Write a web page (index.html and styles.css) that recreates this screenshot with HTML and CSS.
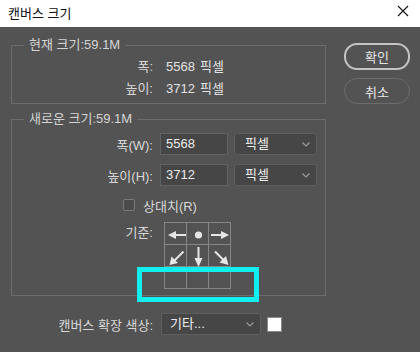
FILE: index.html
```html
<!DOCTYPE html>
<html lang="ko">
<head>
  <meta charset="UTF-8" />
  <title>캔버스 크기</title>
  <link rel="stylesheet" href="styles.css">
</head>
<body>

<div class="titlebar">
  <span class="title">캔버스 크기</span>
  <svg class="close" width="12" height="12" viewBox="0 0 12 12">
    <path d="M1 1 L11 11 M11 1 L1 11" stroke="#111" stroke-width="1.1" fill="none"/>
  </svg>
</div>

<div class="dialog">
  <div class="main">
    <fieldset class="group current">
      <legend>현재 크기:59.1M</legend>
      <div class="info-row"><span class="label">폭:</span><span class="value">5568</span><span class="unit">픽셀</span></div>
      <div class="info-row"><span class="label">높이:</span><span class="value">3712</span><span class="unit">픽셀</span></div>
    </fieldset>

    <fieldset class="group new">
      <legend>새로운 크기:59.1M</legend>
      <div class="field-row">
        <label class="label">폭(W):</label>
        <div class="num">5568</div>
        <div class="select">픽셀
          <svg class="chev" width="8" height="5" viewBox="0 0 8 5"><path d="M0.5 0.5 L4 4 L7.5 0.5" stroke="#9a9a9a" stroke-width="1.2" fill="none"/></svg>
        </div>
      </div>
      <div class="field-row second">
        <label class="label">높이(H):</label>
        <div class="num">3712</div>
        <div class="select">픽셀
          <svg class="chev" width="8" height="5" viewBox="0 0 8 5"><path d="M0.5 0.5 L4 4 L7.5 0.5" stroke="#9a9a9a" stroke-width="1.2" fill="none"/></svg>
        </div>
      </div>
      <div class="check-row">
        <span class="checkbox"></span>
        <span>상대치(R)</span>
      </div>
      <div class="anchor-row">
        <span class="label">기준:</span>
        <div class="anchor-grid">
          <div class="cell">
            <svg width="22" height="22" viewBox="0 0 22 22"><path d="M10 12 H21" stroke="#e6e6e6" stroke-width="2"/><path d="M3 12 L11 8 L11 16 Z" fill="#e6e6e6"/></svg>
          </div>
          <div class="cell">
            <svg width="22" height="22" viewBox="0 0 22 22"><circle cx="11.5" cy="12" r="3.6" fill="#e6e6e6"/></svg>
          </div>
          <div class="cell">
            <svg width="22" height="22" viewBox="0 0 22 22"><path d="M2 12 H13" stroke="#e6e6e6" stroke-width="2"/><path d="M20 12 L12 8 L12 16 Z" fill="#e6e6e6"/></svg>
          </div>
          <div class="cell">
            <svg width="22" height="22" viewBox="0 0 22 22"><path d="M18.5 6.5 L9 16" stroke="#e6e6e6" stroke-width="2"/><path d="M4.5 20 L6.5 11.5 L13 18 Z" fill="#e6e6e6"/></svg>
          </div>
          <div class="cell">
            <svg width="22" height="22" viewBox="0 0 22 22"><path d="M11.5 2 V14" stroke="#e6e6e6" stroke-width="2"/><path d="M11.5 22 L7.5 13 L15.5 13 Z" fill="#e6e6e6"/></svg>
          </div>
          <div class="cell">
            <svg width="22" height="22" viewBox="0 0 22 22"><path d="M6 6.5 L15 15.5" stroke="#e6e6e6" stroke-width="2"/><path d="M19.5 20 L10.5 17.5 L17 11 Z" fill="#e6e6e6"/></svg>
          </div>
          <div class="cell"></div>
          <div class="cell"></div>
          <div class="cell"></div>
        </div>
      </div>
    </fieldset>

    <div class="field-row ext">
      <label class="label">캔버스 확장 색상:</label>
      <div class="select wide">기타...
        <svg class="chev" width="8" height="5" viewBox="0 0 8 5"><path d="M0.5 0.5 L4 4 L7.5 0.5" stroke="#9a9a9a" stroke-width="1.2" fill="none"/></svg>
      </div>
      <span class="swatch"></span>
    </div>
  </div>

  <div class="buttons">
    <button class="btn primary">확인</button>
    <button class="btn">취소</button>
  </div>
</div>

<div class="highlight"></div>

</body>
</html>
```

FILE: styles.css
```css
body {
  font-family: "Liberation Sans", "Noto Sans CJK KR", sans-serif;
  font-size: 13px;
  background: #535353;
  color: #d8d8d8;
  margin: 0;
  padding: 0;
  width: 420px;
  height: 352px;
  overflow: hidden;
}
.titlebar {
  height: 27px;
  background: #fff;
  color: #111;
  display: flex;
  align-items: center;
  justify-content: space-between;
  padding: 0 11px 0 8px;
  box-sizing: border-box;
}
.titlebar .title {
  font-size: 13px;
  margin-top: -2px;
}
.close {
  margin-top: -6px;
}
.dialog {
  display: flex;
  padding: 10px 0 0 11px;
}
.main {
  width: 315px;
}
.group {
  margin: 0;
  padding: 0 0 3px 0;
  border: 1px solid #6c6c6c;
  min-width: 0;
}
.group legend {
  margin-left: 12px;
  padding: 0 5px;
  line-height: 16px;
  color: #d4d4d4;
}
.group.current {
  padding-top: 3px;
}
.group.new {
  margin-top: 7px;
  padding: 6px 0 6px 0;
}
.label {
  width: 141px;
  text-align: right;
  flex: none;
}
.info-row {
  display: flex;
  line-height: 22px;
}
.info-row .value {
  margin-left: 13px;
  width: 34px;
  color: #e2e2e2;
}
.info-row .unit {
  color: #e2e2e2;
}
.field-row {
  display: flex;
  align-items: center;
  height: 22px;
}
.field-row.second {
  margin-top: 9px;
}
.num {
  margin-left: 7px;
  width: 68px;
  height: 22px;
  box-sizing: border-box;
  background: #464646;
  border: 1px solid #626262;
  color: #ececec;
  padding-left: 5px;
  line-height: 20px;
}
.select {
  margin-left: 6px;
  width: 83px;
  height: 22px;
  box-sizing: border-box;
  background: #464646;
  border: 1px solid #5e5e5e;
  border-radius: 3px;
  color: #ececec;
  padding-left: 10px;
  line-height: 20px;
  display: flex;
  justify-content: space-between;
  align-items: center;
}
.chev {
  margin-right: 6px;
}
.check-row {
  display: flex;
  align-items: center;
  height: 18px;
  margin-top: 10px;
  margin-left: 111px;
  gap: 8px;
}
.checkbox {
  width: 12px;
  height: 12px;
  box-sizing: border-box;
  border: 1px solid #7a7a7a;
  border-radius: 2px;
  background: #4b4b4b;
}
.anchor-row {
  display: flex;
  margin-top: 8px;
}
.anchor-row .label {
  line-height: 22px;
}
.anchor-grid {
  margin-left: 11px;
  display: grid;
  grid-template-columns: repeat(3, 22px);
  grid-auto-rows: 22px;
  border-top: 1px solid #868686;
  border-left: 1px solid #868686;
}
.cell {
  border-right: 1px solid #868686;
  border-bottom: 1px solid #868686;
}
.cell svg {
  display: block;
}
.field-row.ext {
  margin-top: 17px;
}
.field-row.ext .label {
  width: 142px;
}
.select.wide {
  margin-left: 8px;
  width: 100px;
  padding-left: 8px;
}
.swatch {
  margin-left: 6px;
  width: 15px;
  height: 15px;
  box-sizing: border-box;
  background: #fff;
  border: 1px solid #8a8a8a;
}
.buttons {
  margin-left: 18px;
  margin-top: 6px;
  display: flex;
  flex-direction: column;
  gap: 8px;
}
.btn {
  width: 66px;
  height: 26px;
  border-radius: 13px;
  background: transparent;
  color: #e6e6e6;
  font-family: "Liberation Sans", "Noto Sans CJK KR", sans-serif;
  font-size: 13px;
  border: 1px solid #6c6c6c;
  padding: 0;
}
.btn.primary {
  height: 27px;
  border: 2px solid #c4c4c4;
}
.highlight {
  position: absolute;
  left: 137px;
  top: 267px;
  width: 122px;
  height: 35px;
  box-sizing: border-box;
  border: 5px solid #10f0f0;
}
```
